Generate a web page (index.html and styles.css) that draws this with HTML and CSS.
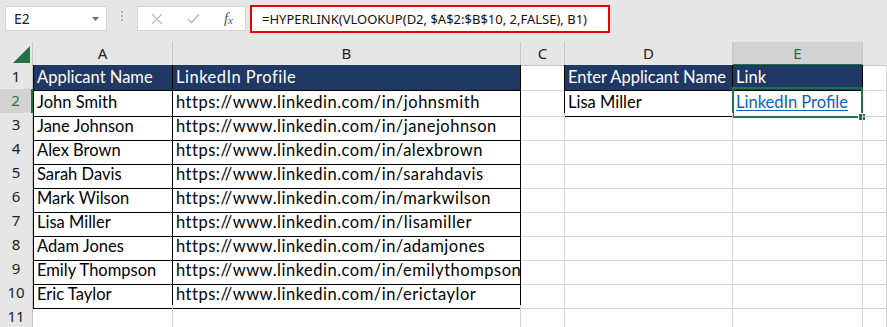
FILE: index.html
```html
<!DOCTYPE html>
<html lang="en">
<head>
    <meta charset="UTF-8">
    <title>LinkedIn lookup</title>
    <link rel="stylesheet" href="styles.css">
</head>
<body>
    <div class="formula-bar">
        <div class="name-box">
            <span>E2</span>
            <svg class="caret" width="7" height="4" viewBox="0 0 7 4"><polygon points="0,0 7,0 3.5,4" fill="#6f6f6f"/></svg>
        </div>
        <div class="grip"><i></i><i></i><i></i></div>
        <div class="fx-box">
            <svg width="12" height="12" viewBox="0 0 12 12"><path d="M1 1 L11 11 M11 1 L1 11" stroke="#bdbdbd" stroke-width="1.3" fill="none"/></svg>
            <svg width="13" height="11" viewBox="0 0 13 11"><path d="M1 6 L4.5 9.5 L12 1.5" stroke="#bdbdbd" stroke-width="1.6" fill="none"/></svg>
            <span class="fx">f<sub>x</sub></span>
        </div>
        <div class="formula">=HYPERLINK(VLOOKUP(D2, $A$2:$B$10, 2,FALSE), B1)</div>
    </div>

    <div class="sheet">
        <div class="row col-heads">
            <div class="corner"><svg width="17" height="17" viewBox="0 0 17 17"><polygon points="17,0 17,17 0,17" fill="#217346"/></svg></div>
            <div class="ch">A</div>
            <div class="ch">B</div>
            <div class="ch">C</div>
            <div class="ch">D</div>
            <div class="ch ch-active">E</div>
            <div class="ch ch-last"></div>
        </div>

        <div class="row">
            <div class="rh">1</div>
            <div class="c head t-left">Applicant Name</div>
            <div class="c head t-right url">LinkedIn Profile</div>
            <div class="c t-gap"></div>
            <div class="c head">Enter Applicant Name</div>
            <div class="c head t-right">Link</div>
            <div class="c"></div>
        </div>
        <div class="row">
            <div class="rh rh-active">2</div>
            <div class="c t t-left">John Smith</div>
            <div class="c t url">https://www.linkedin.com/in/johnsmith</div>
            <div class="c t-gap"></div>
            <div class="c t">Lisa Miller</div>
            <div class="c t active"><a class="link">LinkedIn Profile</a><span class="sel"><span class="handle"></span></span></div>
            <div class="c"></div>
        </div>
        <div class="row">
            <div class="rh">3</div>
            <div class="c t t-left">Jane Johnson</div>
            <div class="c t url">https://www.linkedin.com/in/janejohnson</div>
            <div class="c"></div><div class="c"></div><div class="c"></div><div class="c"></div>
        </div>
        <div class="row">
            <div class="rh">4</div>
            <div class="c t t-left">Alex Brown</div>
            <div class="c t url">https://www.linkedin.com/in/alexbrown</div>
            <div class="c"></div><div class="c"></div><div class="c"></div><div class="c"></div>
        </div>
        <div class="row">
            <div class="rh">5</div>
            <div class="c t t-left">Sarah Davis</div>
            <div class="c t url">https://www.linkedin.com/in/sarahdavis</div>
            <div class="c"></div><div class="c"></div><div class="c"></div><div class="c"></div>
        </div>
        <div class="row">
            <div class="rh">6</div>
            <div class="c t t-left">Mark Wilson</div>
            <div class="c t url">https://www.linkedin.com/in/markwilson</div>
            <div class="c"></div><div class="c"></div><div class="c"></div><div class="c"></div>
        </div>
        <div class="row">
            <div class="rh">7</div>
            <div class="c t t-left">Lisa Miller</div>
            <div class="c t url">https://www.linkedin.com/in/lisamiller</div>
            <div class="c"></div><div class="c"></div><div class="c"></div><div class="c"></div>
        </div>
        <div class="row">
            <div class="rh">8</div>
            <div class="c t t-left">Adam Jones</div>
            <div class="c t url">https://www.linkedin.com/in/adamjones</div>
            <div class="c"></div><div class="c"></div><div class="c"></div><div class="c"></div>
        </div>
        <div class="row">
            <div class="rh">9</div>
            <div class="c t t-left">Emily Thompson</div>
            <div class="c t url">https://www.linkedin.com/in/emilythompson</div>
            <div class="c"></div><div class="c"></div><div class="c"></div><div class="c"></div>
        </div>
        <div class="row">
            <div class="rh">10</div>
            <div class="c t t-left">Eric Taylor</div>
            <div class="c t url">https://www.linkedin.com/in/erictaylor</div>
            <div class="c"></div><div class="c"></div><div class="c"></div><div class="c"></div>
        </div>
        <div class="row">
            <div class="rh">11</div>
            <div class="c"></div><div class="c"></div><div class="c"></div><div class="c"></div><div class="c"></div><div class="c"></div>
        </div>
    </div>
</body>
</html>
```

FILE: styles.css
```css
body {
    margin: 0;
    background-color: #e6e6e6;
    font-family: "Noto Sans", sans-serif;
    overflow: hidden;
}
.formula-bar {
    height: 42px;
    display: flex;
    align-items: flex-start;
    background-color: #e6e6e6;
}
.name-box {
    box-sizing: border-box;
    width: 102px;
    height: 25px;
    margin: 6px 0 0 5px;
    padding: 0 7px 0 8px;
    display: flex;
    align-items: center;
    justify-content: space-between;
    background-color: #fff;
    border: 1px solid #d4d4d4;
    font-size: 14px;
    color: #222;
}
.grip {
    width: 30px;
    height: 31px;
    display: flex;
    flex-direction: column;
    align-items: center;
    justify-content: center;
    gap: 2px;
}
.grip i {
    width: 2px;
    height: 2px;
    background-color: #b3b3b3;
}
.fx-box {
    box-sizing: border-box;
    width: 109px;
    height: 25px;
    margin-top: 6px;
    padding: 0 12px 0 13px;
    display: flex;
    align-items: center;
    justify-content: space-between;
    background-color: #fff;
    border: 1px solid #d4d4d4;
}
.fx {
    font-family: "Liberation Serif", serif;
    font-style: italic;
    font-size: 15px;
    color: #555;
}
.fx sub {
    font-size: 11px;
    vertical-align: -1px;
}
.formula {
    box-sizing: border-box;
    width: 360px;
    height: 28px;
    margin: 5px 0 0 4px;
    padding: 0 0 0 10px;
    display: flex;
    align-items: center;
    background-color: #fff;
    border: 2px solid #e60000;
    font-size: 13px;
    color: #111;
    white-space: nowrap;
}

.sheet {
    background-color: #fff;
}
.row {
    display: grid;
    grid-template-columns: 33px 140px 348px 44px 168px 130px 1fr;
    height: 24px;
}
.col-heads {
    height: 23px;
    background-color: #e6e6e6;
}
.corner {
    box-sizing: border-box;
    border-right: 1px solid #c6c6c6;
    border-bottom: 1px solid #c6c6c6;
    display: flex;
    justify-content: flex-end;
    align-items: flex-end;
    padding: 0 2px 2px 0;
}
.ch {
    box-sizing: border-box;
    border-right: 1px solid #c6c6c6;
    border-bottom: 1px solid #c6c6c6;
    text-align: center;
    font-size: 15px;
    line-height: 22px;
    color: #222;
}
.ch-last {
    border-right: none;
}
.ch-active {
    background-color: #d2d2d2;
    color: #217346;
    border-bottom: 2px solid #217346;
}
.rh {
    box-sizing: border-box;
    background-color: #e6e6e6;
    border-right: 1px solid #c6c6c6;
    border-bottom: 1px solid #d4d4d4;
    text-align: center;
    font-size: 15px;
    line-height: 23px;
    color: #222;
}
.rh-active {
    background-color: #d2d2d2;
    color: #217346;
    border-right: 2px solid #217346;
}

.c {
    box-sizing: border-box;
    position: relative;
    border-right: 1px solid #d4d4d4;
    border-bottom: 1px solid #d4d4d4;
    padding: 0 3px;
    font-family: Lato, sans-serif;
    font-size: 16.5px;
    line-height: 27px;
    color: #000;
    white-space: nowrap;
}
.url {
    letter-spacing: 0.5px;
}
.head {
    background-color: #203864;
    color: #fff;
    line-height: 25px;
    border-right-color: #000;
    border-bottom-color: #000;
}
.t {
    border-right-color: #000;
    border-bottom-color: #000;
}
.t-left {
    box-shadow: inset 1px 0 #000;
    padding-left: 4px;
}
.t-gap {
    border-right-color: #000;
}
.link {
    color: #0563c1;
    text-decoration: underline;
    text-underline-offset: 2px;
}
.sel {
    position: absolute;
    left: -1px;
    top: -2px;
    right: -1px;
    bottom: -2px;
    border: 2px solid #217346;
}
.handle {
    position: absolute;
    right: -5px;
    bottom: -5px;
    width: 6px;
    height: 6px;
    background-color: #217346;
    border: 1px solid #fff;
}
```
